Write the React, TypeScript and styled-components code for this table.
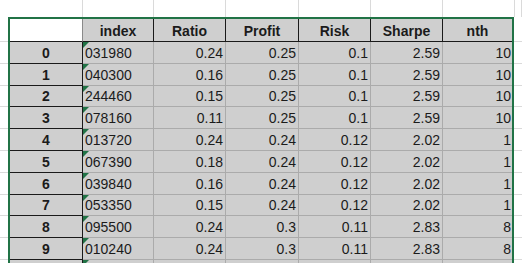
import styled, { createGlobalStyle } from 'styled-components';

const GlobalStyle = createGlobalStyle`
  html, body {
    margin: 0;
    padding: 0;
    background: #ffffff;
    overflow: hidden;
  }
  body {
    font-family: "Liberation Sans", Arial, sans-serif;
    color: #1b1b1b;
  }
`;

const COLS = [73, 71, 72, 73, 72, 72, 69];
const ROW_H = 21.8;

const rows = [
  ['031980', '0.24', '0.25', '0.1', '2.59', '10'],
  ['040300', '0.16', '0.25', '0.1', '2.59', '10'],
  ['244460', '0.15', '0.25', '0.1', '2.59', '10'],
  ['078160', '0.11', '0.25', '0.1', '2.59', '10'],
  ['013720', '0.24', '0.24', '0.12', '2.02', '1'],
  ['067390', '0.18', '0.24', '0.12', '2.02', '1'],
  ['039840', '0.16', '0.24', '0.12', '2.02', '1'],
  ['053350', '0.15', '0.24', '0.12', '2.02', '1'],
  ['095500', '0.24', '0.3', '0.11', '2.83', '8'],
  ['010240', '0.24', '0.3', '0.11', '2.83', '8'],
  ['', '', '', '', '', ''],
];

const headers = ['index', 'Ratio', 'Profit', 'Risk', 'Sharpe', 'nth'];

const Sheet = styled.div`
  display: flex;
  flex-direction: column;
  width: 522px;
  height: 263px;
  overflow: hidden;
  font-size: 14px;
`;

const TopStrip = styled.div`
  display: grid;
  grid-template-columns: 83px 71px 72px 73px 72px 72px 72px 1fr;
  height: 17px;
  flex-shrink: 0;
`;

const BlankCell = styled.div`
  border-right: 1px solid #dadada;
  box-sizing: border-box;
`;

const Middle = styled.div`
  display: flex;
  flex-direction: row;
`;

const Gutter = styled.div<{ $w: number }>`
  width: ${({ $w }) => $w}px;
  flex-shrink: 0;
  display: grid;
  grid-template-rows: 25px repeat(12, ${ROW_H}px);
`;

const GutterCell = styled.div`
  border-bottom: 1px solid #dadada;
  box-sizing: border-box;
`;

const Table = styled.div`
  display: grid;
  grid-template-columns: ${COLS.map((c) => `${c}px`).join(' ')};
  grid-template-rows: 23px;
  grid-auto-rows: ${ROW_H}px;
  border: 2px solid #217346;
  border-bottom: none;
  flex-shrink: 0;
`;

const Corner = styled.div`
  background: #ffffff;
  border-right: 1px solid #8a8a8a;
  border-bottom: 1px solid #1a1a1a;
  box-sizing: border-box;
`;

const HeadCell = styled.div<{ $last?: boolean }>`
  background: #cfcfcf;
  border-right: ${({ $last }) => ($last ? 'none' : '1px solid #1a1a1a')};
  border-bottom: 1px solid #1a1a1a;
  box-sizing: border-box;
  display: flex;
  align-items: center;
  justify-content: center;
  font-weight: bold;
  padding-top: 1px;
`;

const RowLabel = styled.div`
  background: #cfcfcf;
  border-right: 1px solid #1a1a1a;
  border-bottom: 1px solid #1a1a1a;
  box-sizing: border-box;
  display: flex;
  align-items: center;
  justify-content: center;
  font-weight: bold;
  padding-top: 1px;
`;

const Cell = styled.div<{ $text?: boolean; $last?: boolean }>`
  position: relative;
  background: #cfcfcf;
  border-right: ${({ $last }) => ($last ? 'none' : '1px solid #ababab')};
  border-bottom: 1px solid #ababab;
  box-sizing: border-box;
  display: flex;
  align-items: center;
  justify-content: ${({ $text }) => ($text ? 'flex-start' : 'flex-end')};
  padding: 1px ${({ $last }) => ($last ? 1 : 2)}px 0 2px;
  white-space: nowrap;

  ${({ $text }) =>
    $text &&
    `
    &::before {
      content: '';
      position: absolute;
      left: 0;
      top: 0;
      width: 0;
      height: 0;
      border-top: 6px solid #217346;
      border-right: 6px solid transparent;
    }
  `}
`;

const App = () => {
  return (
    <>
      <GlobalStyle />
      <Sheet>
        <TopStrip>
          {Array.from({ length: 8 }).map((_, i) => (
            <BlankCell key={i} />
          ))}
        </TopStrip>
        <Middle>
          <Gutter $w={8}>
            {Array.from({ length: 13 }).map((_, i) => (
              <GutterCell key={i} />
            ))}
          </Gutter>
          <Table>
            <Corner />
            {headers.map((h, i) => (
              <HeadCell key={h} $last={i === headers.length - 1}>
                {h}
              </HeadCell>
            ))}
            {rows.map((r, ri) => [
              <RowLabel key={`l${ri}`}>{ri < 10 ? ri : ''}</RowLabel>,
              ...r.map((v, ci) => (
                <Cell
                  key={`c${ri}-${ci}`}
                  $text={ci === 0}
                  $last={ci === r.length - 1}
                >
                  {v}
                </Cell>
              )),
            ])}
          </Table>
          <Gutter $w={8}>
            {Array.from({ length: 13 }).map((_, i) => (
              <GutterCell key={i} />
            ))}
          </Gutter>
        </Middle>
      </Sheet>
    </>
  );
};

export default App;
